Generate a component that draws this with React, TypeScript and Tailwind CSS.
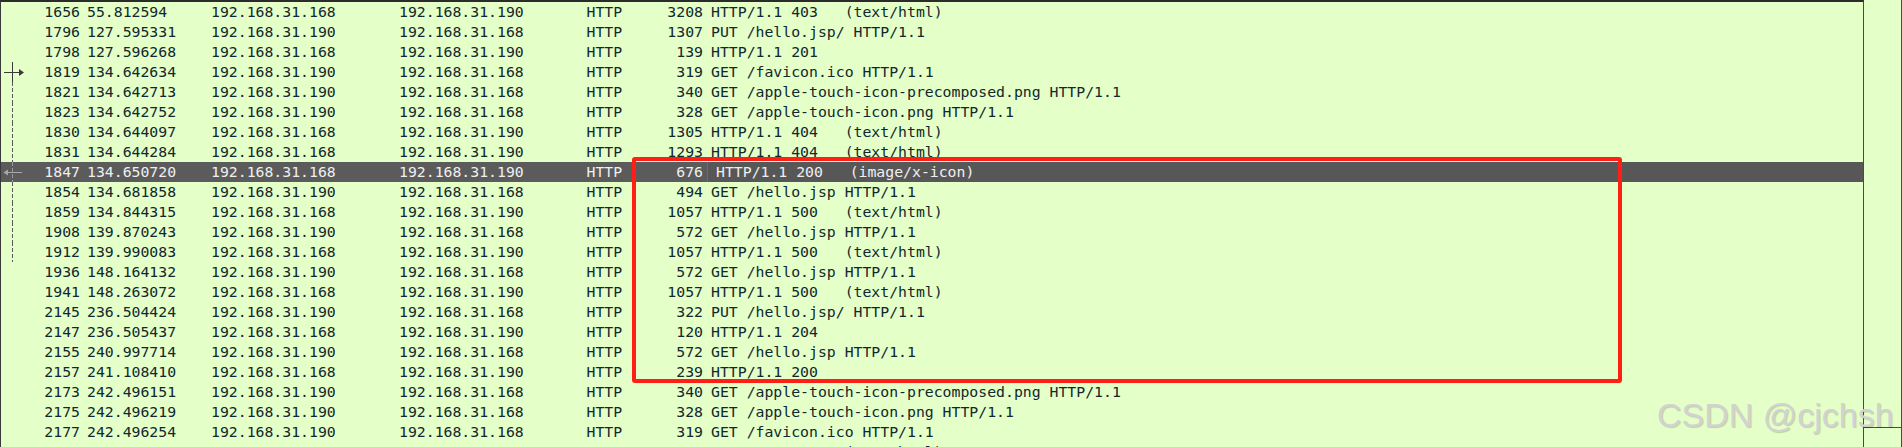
type Packet = {
  no: string;
  time: string;
  src: string;
  dst: string;
  len: string;
  info: string;
};

const A = "192.168.31.168";
const B = "192.168.31.190";

const packets: Packet[] = [
  { no: "1656", time: "55.812594", src: A, dst: B, len: "3208", info: "HTTP/1.1 403   (text/html)" },
  { no: "1796", time: "127.595331", src: B, dst: A, len: "1307", info: "PUT /hello.jsp/ HTTP/1.1" },
  { no: "1798", time: "127.596268", src: A, dst: B, len: "139", info: "HTTP/1.1 201" },
  { no: "1819", time: "134.642634", src: B, dst: A, len: "319", info: "GET /favicon.ico HTTP/1.1" },
  { no: "1821", time: "134.642713", src: B, dst: A, len: "340", info: "GET /apple-touch-icon-precomposed.png HTTP/1.1" },
  { no: "1823", time: "134.642752", src: B, dst: A, len: "328", info: "GET /apple-touch-icon.png HTTP/1.1" },
  { no: "1830", time: "134.644097", src: A, dst: B, len: "1305", info: "HTTP/1.1 404   (text/html)" },
  { no: "1831", time: "134.644284", src: A, dst: B, len: "1293", info: "HTTP/1.1 404   (text/html)" },
  { no: "1847", time: "134.650720", src: A, dst: B, len: "676", info: "HTTP/1.1 200   (image/x-icon)" },
  { no: "1854", time: "134.681858", src: B, dst: A, len: "494", info: "GET /hello.jsp HTTP/1.1" },
  { no: "1859", time: "134.844315", src: A, dst: B, len: "1057", info: "HTTP/1.1 500   (text/html)" },
  { no: "1908", time: "139.870243", src: B, dst: A, len: "572", info: "GET /hello.jsp HTTP/1.1" },
  { no: "1912", time: "139.990083", src: A, dst: B, len: "1057", info: "HTTP/1.1 500   (text/html)" },
  { no: "1936", time: "148.164132", src: B, dst: A, len: "572", info: "GET /hello.jsp HTTP/1.1" },
  { no: "1941", time: "148.263072", src: A, dst: B, len: "1057", info: "HTTP/1.1 500   (text/html)" },
  { no: "2145", time: "236.504424", src: B, dst: A, len: "322", info: "PUT /hello.jsp/ HTTP/1.1" },
  { no: "2147", time: "236.505437", src: A, dst: B, len: "120", info: "HTTP/1.1 204" },
  { no: "2155", time: "240.997714", src: B, dst: A, len: "572", info: "GET /hello.jsp HTTP/1.1" },
  { no: "2157", time: "241.108410", src: A, dst: B, len: "239", info: "HTTP/1.1 200" },
  { no: "2173", time: "242.496151", src: B, dst: A, len: "340", info: "GET /apple-touch-icon-precomposed.png HTTP/1.1" },
  { no: "2175", time: "242.496219", src: B, dst: A, len: "328", info: "GET /apple-touch-icon.png HTTP/1.1" },
  { no: "2177", time: "242.496254", src: B, dst: A, len: "319", info: "GET /favicon.ico HTTP/1.1" },
  { no: "2181", time: "242.497519", src: A, dst: B, len: "1293", info: "HTTP/1.1 404   (text/html)" },
];

const SELECTED = 8;
const FIRST = 3;
const LAST = 12;

// related-packet marker in the left gutter
const Marker = ({ i }: { i: number }) => {
  if (i < FIRST || i > LAST) return null;
  const sel = i === SELECTED;
  return (
    <svg width="39" height="20" className="absolute left-0 top-0">
      {i === FIRST ? (
        <>
          <line x1="11.5" y1="0" x2="11.5" y2="20" stroke="#3a3a3a" strokeWidth="1" />
          <line x1="3" y1="10.5" x2="19" y2="10.5" stroke="#3a3a3a" strokeWidth="1" />
          <polygon points="18,7 23,10.5 18,14" fill="#3a3a3a" />
        </>
      ) : (
        <line
          x1="11.5"
          y1="0"
          x2="11.5"
          y2="20"
          stroke={sel ? "#9a9a9a" : "#5a5a5a"}
          strokeWidth="1"
          strokeDasharray="4 2"
        />
      )}
      {sel && (
        <>
          <line x1="6" y1="10.5" x2="21" y2="10.5" stroke="#a8a8a8" strokeWidth="1" />
          <polygon points="7,7.5 2.5,10.5 7,13.5" fill="#a8a8a8" />
        </>
      )}
    </svg>
  );
};

const Row = ({ p, i }: { p: Packet; i: number }) => {
  const sel = i === SELECTED;
  return (
    <div
      className={
        "flex h-5 shrink-0 whitespace-pre leading-5 " +
        (sel ? "bg-[#5b5b5b] text-[#efefef]" : "text-[#12272e]")
      }
    >
      <div className="relative w-[39px] shrink-0">
        <Marker i={i} />
      </div>
      <div className="w-[40px] shrink-0 text-right">{p.no}</div>
      <div className="w-[127px] shrink-0 pl-[7px]">{p.time}</div>
      <div className="w-[188px] shrink-0 pl-[4px]">{p.src}</div>
      <div className="w-[187px] shrink-0 pl-[4px]">{p.dst}</div>
      <div className="w-[60px] shrink-0 pl-[4.5px]">HTTP</div>
      <div className="w-[61px] shrink-0 text-right">{p.len}</div>
      <div className={"flex-1 pl-[8px] " + (sel ? "border-l border-[#6c6c6c] bg-[#575757] pl-[4px] ml-[4px]" : "")}>
        {p.info}
      </div>
    </div>
  );
};

export default function App() {
  return (
    <div className="relative flex h-[447px] w-[1902px] overflow-hidden bg-[#e4ffc7] font-['DejaVu_Sans_Mono','Liberation_Mono',monospace] text-[14.8px]">
      <div className="flex h-full w-[1864px] shrink-0 flex-col overflow-hidden border-l border-r border-t-2 border-l-[#3a3a3a] border-r-[#4a4a4a] border-t-[#2b2b2b]">
        {packets.map((p, i) => (
          <Row key={p.no} p={p} i={i} />
        ))}
      </div>
      <div className="flex h-full w-[38px] shrink-0 flex-col border-r border-[#4a4a4a]">
        <div className="h-[428px] shrink-0 border-b border-[#4a4a4a]" />
      </div>

      {/* red annotation box */}
      <div className="pointer-events-none absolute left-[632px] top-[157px] h-[226px] w-[990px] rounded-[3px] border-[4.5px] border-[#ff1f14]" />

      {/* watermark */}
      <div className="pointer-events-none absolute left-[1657px] top-[398px] font-['Liberation_Sans',Arial,sans-serif] text-[34px] leading-none text-[#d2d2d2] [text-shadow:1px_1px_1px_rgba(0,0,0,0.18)]">
        CSDN @cjchsh
      </div>
    </div>
  );
}
